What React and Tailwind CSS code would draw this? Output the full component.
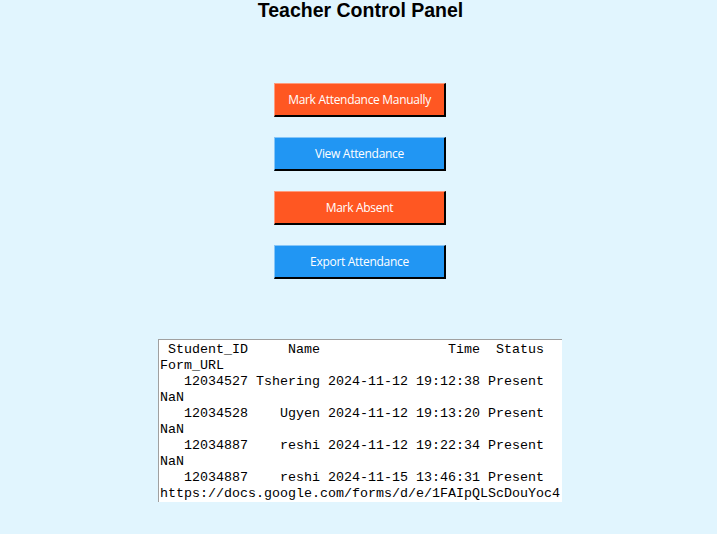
import React from "react";

const orange = "bg-[#ff5722] border-t-[#ff9b7c] border-l-[#ff9b7c]";
const blue = "bg-[#2196f3] border-t-[#86c6f8] border-l-[#86c6f8]";

const buttons = [
  { label: "Mark Attendance Manually", color: orange },
  { label: "View Attendance", color: blue },
  { label: "Mark Absent", color: orange },
  { label: "Export Attendance", color: blue },
];

const lines = [
  " Student_ID     Name                Time  Status",
  "Form_URL",
  "   12034527 Tshering 2024-11-12 19:12:38 Present",
  "NaN",
  "   12034528    Ugyen 2024-11-12 19:13:20 Present",
  "NaN",
  "   12034887    reshi 2024-11-12 19:22:34 Present",
  "NaN",
  "   12034887    reshi 2024-11-15 13:46:31 Present",
  "https://docs.google.com/forms/d/e/1FAIpQLScDouYoc4",
];

export default function App() {
  return (
    <div className="w-[717px] h-[534px] bg-[#e1f5fe] flex flex-col items-center overflow-hidden">
      {/* Title */}
      <h1 className="text-[19.5px] leading-[20px] font-bold text-black font-['Liberation_Sans',Arial,sans-serif] ml-[4px]">
        Teacher Control Panel
      </h1>

      {/* Buttons */}
      <div className="mt-[63px] flex flex-col gap-[20px] ml-[3px]">
        {buttons.map((b) => (
          <button
            key={b.label}
            className={`w-[172px] h-[34px] flex items-center justify-center pt-[1px] border-t border-l border-r-2 border-b-2 border-r-black border-b-black text-white text-[12px] font-['Open_Sans',sans-serif] tracking-[-0.3px] ${b.color}`}
          >
            {b.label}
          </button>
        ))}
      </div>

      {/* Output text */}
      <div className="mt-[60px] ml-[3px] w-[404px] h-[163px] bg-white border-t border-l border-[#a0a0a0] pl-[1px] pt-[2px] font-['Liberation_Mono','Courier_New',monospace] text-[13.333px] leading-[16px] text-black">
        {lines.map((l, i) => (
          <div key={i} className="whitespace-pre h-[16px]">
            {l}
          </div>
        ))}
      </div>
    </div>
  );
}
